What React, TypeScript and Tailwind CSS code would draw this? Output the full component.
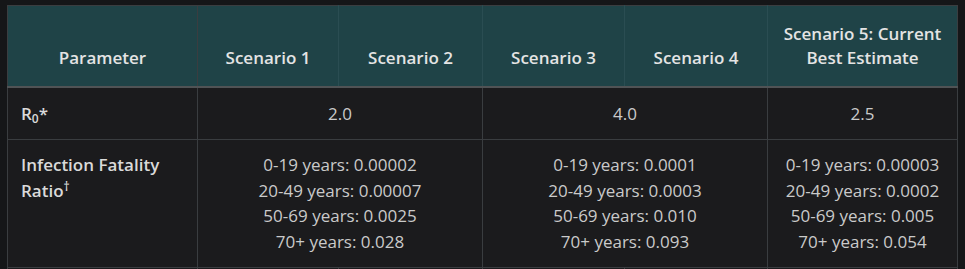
import React from 'react';

const ageRows = [
  ['0-19 years: 0.00002', '20-49 years: 0.00007', '50-69 years: 0.0025', '70+ years: 0.028'],
  ['0-19 years: 0.0001', '20-49 years: 0.0003', '50-69 years: 0.010', '70+ years: 0.093'],
  ['0-19 years: 0.00003', '20-49 years: 0.0002', '50-69 years: 0.005', '70+ years: 0.054'],
];

const headers = ['Scenario 1', 'Scenario 2', 'Scenario 3', 'Scenario 4', 'Scenario 5: Current Best Estimate'];

export default function App() {
  return (
    <div className="min-h-screen bg-[#151618] pl-[7px] pt-[5px] font-['Open_Sans',sans-serif]">
      <table className="w-[951px] table-fixed border-collapse text-[17px] leading-[25.5px] text-[#cacaca]">
        <colgroup>
          <col className="w-[190px]" />
          <col className="w-[141px]" />
          <col className="w-[144px]" />
          <col className="w-[142px]" />
          <col className="w-[143px]" />
          <col className="w-[190px]" />
        </colgroup>
        <thead>
          <tr className="bg-[#1f4347]">
            <th className="border border-[#3a3d40] border-b-2 border-b-[#505355] px-3 py-4 align-bottom text-center font-semibold leading-6 text-[#e4e4e4]">
              Parameter
            </th>
            {headers.map((h) => (
              <th
                key={h}
                className="border border-[#2a4d52] border-t-[#3a3d40] border-b-2 border-b-[#505355] px-3 py-4 align-bottom text-center font-semibold leading-6 text-[#e4e4e4] last:border-r-[#3a3d40]"
              >
                {h}
              </th>
            ))}
          </tr>
        </thead>
        <tbody className="bg-[#1b1b1d]">
          <tr>
            <td className="border border-[#3a3d40] px-[13px] py-[12.5px] font-semibold text-[#dadada]">
              R<sub className="text-[12px] leading-none font-semibold">0</sub>*
            </td>
            <td colSpan={2} className="border border-[#3a3d40] px-3 py-[12.5px] text-center">2.0</td>
            <td colSpan={2} className="border border-[#3a3d40] px-3 py-[12.5px] text-center">4.0</td>
            <td className="border border-[#3a3d40] px-3 py-[12.5px] text-center">2.5</td>
          </tr>
          <tr>
            <td className="border border-[#3a3d40] px-[13px] py-[12.5px] align-top font-semibold text-[#dadada]">
              Infection Fatality Ratio<sup className="text-[12px] leading-none">†</sup>
            </td>
            {ageRows.map((lines, i) => (
              <td
                key={i}
                colSpan={i < 2 ? 2 : 1}
                className="border border-[#3a3d40] px-3 py-[12.5px] align-top text-center"
              >
                {lines.map((l) => (
                  <div key={l}>{l}</div>
                ))}
              </td>
            ))}
          </tr>
          <tr className="h-[52px]">
            {[0, 1, 2, 3, 4, 5].map((i) => (
              <td key={i} className="border border-[#3a3d40]" />
            ))}
          </tr>
        </tbody>
      </table>
    </div>
  );
}
